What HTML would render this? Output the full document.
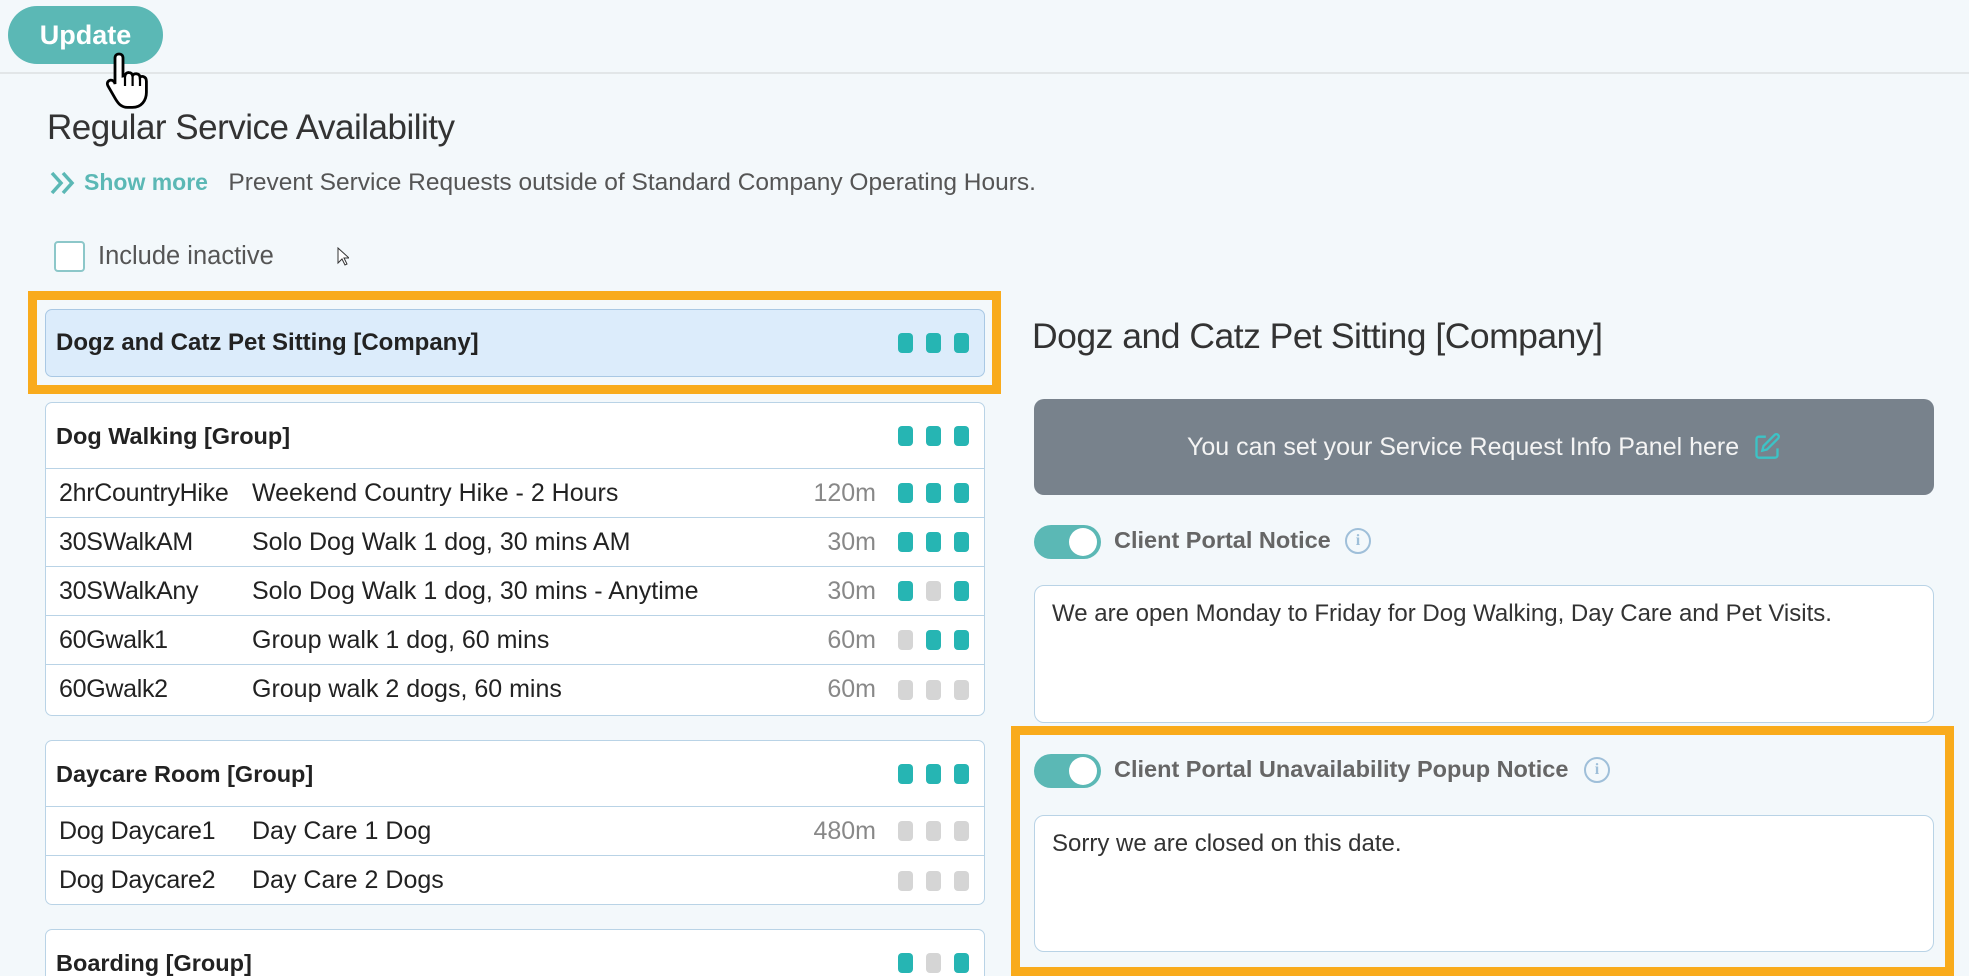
<!DOCTYPE html>
<html style="overflow:hidden;height:976px"><head><style>
*{box-sizing:border-box;margin:0;padding:0}
body{width:1969px;height:976px;background:#f3f8fb;font-family:"Liberation Sans",sans-serif;position:relative;overflow:hidden;color:#333}
.a{position:absolute}
.btn{left:8px;top:6px;width:155px;height:58px;background:#5bb8b5;border-radius:29px;color:#fff;font-weight:bold;font-size:27px;line-height:58px;text-align:center}
.line{left:0;top:72px;width:1969px;height:2px;background:#e2e6e8}
.box{background:#fff;border:1px solid #b9d3e6;border-radius:7px;left:45px;width:940px;overflow:hidden}
.hdr{height:66px;line-height:66px;padding-left:10px;font-weight:bold;font-size:23.5px;color:#222;position:relative;border-bottom:1px solid #b9d3e6}
.row{height:49px;line-height:48px;font-size:25px;position:relative;border-bottom:1px solid #b9d3e6;color:#222}
.row:last-child{border-bottom:none}
.c1{position:absolute;left:13px;letter-spacing:-0.3px}.c2{position:absolute;left:206px}
.c3{position:absolute;right:108px;color:#888}
.dots{position:absolute;right:15px;top:50%;margin-top:-10px;display:flex;gap:13px}
.dots i{width:15px;height:20px;border-radius:4px;background:#26b5b3;display:block}
.dots i.g{background:#d5d5d5}
.or{border:9px solid #f9ab1c}
.tog{width:67px;height:34px;border-radius:17px;background:#5bb8b5}
.tog:after{content:"";position:absolute;right:4px;top:3px;width:28px;height:28px;border-radius:50%;background:#fff}
.lbl{font-size:23.5px;font-weight:bold;color:#666}
.info{width:26px;height:26px;border:2px solid #9fbfd9;border-radius:50%;color:#9fbfd9;font-size:16px;font-weight:bold;text-align:center;line-height:22px;font-family:"Liberation Serif",serif}
.ta{background:#fff;border:1px solid #b9d3e6;border-radius:10px;left:1034px;width:900px;font-size:24px;color:#333;padding:14px 17px}
</style></head><body>
<div class="a line"></div>
<div class="a btn">Update</div>
<svg class="a" style="left:103px;top:50px" width="52" height="62" viewBox="0 0 26 31"><path d="M8 2c1.3 0 2 .8 2 2v9l1-.2c.2-1 1-1.6 2-1.5 1 0 1.6.7 1.8 1.5.4-.7 1.1-1 2-.9 1 .1 1.6.8 1.7 1.7.5-.4 1.1-.5 1.7-.3 1 .3 1.5 1.2 1.5 2.4v5.5c0 4-2.5 7.5-7 7.5h-2.5c-3 0-4.5-1.8-6-4.3L2.5 18c-.6-1.1-.3-2.2.6-2.7 1-.5 2-.1 2.7.9L6 17V4c0-1.2.8-2 2-2z" fill="#fff" stroke="#000" stroke-width="1.4"/><path d="M11 13v5M14.8 13v5M18.5 14v4" stroke="#000" stroke-width="1.1"/></svg>
<div class="a" style="left:47px;top:108px;font-size:35px;color:#333;letter-spacing:-0.5px">Regular Service Availability</div>
<svg class="a" style="left:50px;top:171px" width="28" height="24" viewBox="0 0 28 24" fill="none" stroke="#5bb8b5" stroke-width="3.5"><path d="M2 2l9 10-9 10M13 2l9 10-9 10"/></svg>
<div class="a" style="left:84px;top:169px;font-size:24.5px;color:#555;white-space:nowrap"><b style="color:#5bb8b5;font-size:23px">Show more</b>&nbsp;&nbsp; Prevent Service Requests outside of Standard Company Operating Hours.</div>
<div class="a" style="left:54px;top:241px;width:31px;height:31px;border:2px solid #8cc7c9;border-radius:4px;background:#fff"></div>
<div class="a" style="left:98px;top:242px;font-size:25.5px;color:#555">Include inactive</div>
<svg class="a" style="left:337px;top:247px" width="12" height="20" viewBox="0 0 12 20"><path d="M1 1v15l4-4 3 6 2-1-3-6h5z" fill="#fff" stroke="#333"/></svg>

<div class="a or" style="left:28px;top:291px;width:973px;height:103px"></div>
<div class="a" style="left:45px;top:309px;width:940px;height:68px;background:#dcecfb;border:1px solid #a9c8e4;border-radius:7px">
<div style="position:absolute;left:10px;top:0;line-height:66px;font-size:24px;font-weight:bold;color:#222">Dogz and Catz Pet Sitting [Company]</div>
<div class="dots"><i></i><i></i><i></i></div></div>

<div class="a box" style="top:402px;height:314px">
<div class="hdr">Dog Walking [Group]<div class="dots"><i></i><i></i><i></i></div></div>
<div class="row"><span class="c1">2hrCountryHike</span><span class="c2">Weekend Country Hike - 2 Hours</span><span class="c3">120m</span><div class="dots"><i></i><i></i><i></i></div></div>
<div class="row"><span class="c1">30SWalkAM</span><span class="c2">Solo Dog Walk 1 dog, 30 mins AM</span><span class="c3">30m</span><div class="dots"><i></i><i></i><i></i></div></div>
<div class="row"><span class="c1">30SWalkAny</span><span class="c2">Solo Dog Walk 1 dog, 30 mins - Anytime</span><span class="c3">30m</span><div class="dots"><i></i><i class="g"></i><i></i></div></div>
<div class="row"><span class="c1">60Gwalk1</span><span class="c2">Group walk 1 dog, 60 mins</span><span class="c3">60m</span><div class="dots"><i class="g"></i><i></i><i></i></div></div>
<div class="row"><span class="c1">60Gwalk2</span><span class="c2">Group walk 2 dogs, 60 mins</span><span class="c3">60m</span><div class="dots"><i class="g"></i><i class="g"></i><i class="g"></i></div></div>
</div>
<div class="a box" style="top:740px;height:165px">
<div class="hdr">Daycare Room [Group]<div class="dots"><i></i><i></i><i></i></div></div>
<div class="row"><span class="c1">Dog Daycare1</span><span class="c2">Day Care 1 Dog</span><span class="c3">480m</span><div class="dots"><i class="g"></i><i class="g"></i><i class="g"></i></div></div>
<div class="row"><span class="c1">Dog Daycare2</span><span class="c2">Day Care 2 Dogs</span><div class="dots"><i class="g"></i><i class="g"></i><i class="g"></i></div></div>
</div>
<div class="a box" style="top:929px;height:80px">
<div class="hdr">Boarding [Group]<div class="dots"><i></i><i class="g"></i><i></i></div></div>
</div>

<div class="a" style="left:1032px;top:316px;font-size:35.5px;color:#333;letter-spacing:-0.5px">Dogz and Catz Pet Sitting [Company]</div>
<div class="a" style="left:1034px;top:399px;width:900px;height:96px;background:#78828c;border-radius:10px;color:#f4f4f4;font-size:25px;text-align:center;line-height:96px">You can set your Service Request Info Panel here &nbsp;<svg width="28" height="28" viewBox="0 0 24 24" style="vertical-align:-5px" fill="none" stroke="#3cc3c6" stroke-width="2"><path d="M11 4H5a2 2 0 0 0-2 2v14a2 2 0 0 0 2 2h14a2 2 0 0 0 2-2v-6"/><path d="M18.5 2.5a2.1 2.1 0 0 1 3 3L12 15l-4 1 1-4z"/></svg></div>
<div class="a tog" style="left:1034px;top:525px"></div>
<div class="a lbl" style="left:1114px;top:527px">Client Portal Notice</div>
<div class="a info" style="left:1345px;top:528px">i</div>
<div class="a ta" style="top:585px;height:138px">We are open Monday to Friday for Dog Walking, Day Care and Pet Visits.</div>
<div class="a or" style="left:1011px;top:726px;width:943px;height:250px"></div>
<div class="a tog" style="left:1034px;top:754px"></div>
<div class="a lbl" style="left:1114px;top:756px">Client Portal Unavailability Popup Notice</div>
<div class="a info" style="left:1584px;top:757px">i</div>
<div class="a ta" style="top:815px;height:137px">Sorry we are closed on this date.</div>
</body></html>
